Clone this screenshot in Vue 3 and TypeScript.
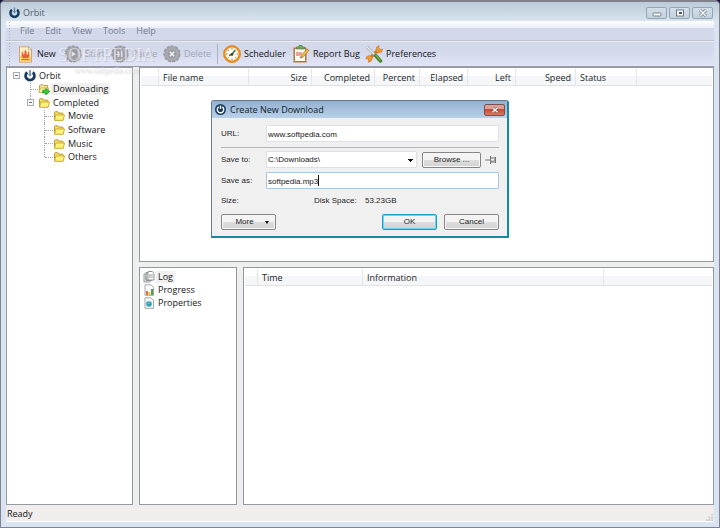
<script setup lang="ts">
import { ref } from 'vue'

interface Column { label: string; kind: string }
interface Branch { label: string; level: number; icon: string; open?: boolean; active?: boolean }

const menus: string[] = ['File', 'Edit', 'View', 'Tools', 'Help']

const columns: Column[] = [
  { label: '', kind: 'mark' },
  { label: 'File name', kind: 'name' },
  { label: 'Size', kind: 'size' },
  { label: 'Completed', kind: 'completed' },
  { label: 'Percent', kind: 'percent' },
  { label: 'Elapsed', kind: 'elapsed' },
  { label: 'Left', kind: 'left' },
  { label: 'Speed', kind: 'speed' },
  { label: 'Status', kind: 'state' },
  { label: '', kind: 'rest' },
]

const logColumns: Column[] = [
  { label: '', kind: 'edge' },
  { label: 'Time', kind: 'time' },
  { label: 'Information', kind: 'info' },
  { label: '', kind: 'rest' },
]

const tree: Branch[] = [
  { label: 'Orbit', level: 0, icon: 'orbit', open: true },
  { label: 'Downloading', level: 1, icon: 'loading', active: true },
  { label: 'Completed', level: 1, icon: 'folder', open: true },
  { label: 'Movie', level: 2, icon: 'folder' },
  { label: 'Software', level: 2, icon: 'folder' },
  { label: 'Music', level: 2, icon: 'folder' },
  { label: 'Others', level: 2, icon: 'folder' },
]

const url = ref('www.softpedia.com')
const folder = ref('C:\\Downloads\\')
const fileName = ref('softpedia.mp3')
</script>

<template>
  <div class="window">
    <svg class="defs" aria-hidden="true">
      <defs>
        <symbol id="orbit" viewBox="0 0 12 12">
          <path d="M3.2 2.4A4.4 4.4 0 1 0 8.8 2.4" fill="none" stroke="#173c60" stroke-width="2.8" />
          <path d="M6 0v5" stroke="#5580a5" stroke-width="1.5" />
          <path d="M4.2 4.2h3.6L6 6.6z" fill="#5580a5" />
        </symbol>
        <symbol id="folder" viewBox="0 0 12 12">
          <path d="M1.5 10V2.5q0-.8.8-.8h2.4l1.2 1.4h3.4q.8 0 .8.8V10z" fill="#f3dc63" stroke="#b99a35" />
          <path d="M1.5 10.3 2.8 5h8.7l-1.3 5.3z" fill="#fff37c" stroke="#cdb13e" />
        </symbol>
        <symbol id="loading" viewBox="0 0 12 12">
          <path d="M1.5 9V2.5l3-1.2 1.2 1.2h3.8V9z" fill="#f4e49b" stroke="#b8a04c" />
          <path d="M1 9.5 2.5 5h8.2L9.3 9.5z" fill="#fff7aa" stroke="#cdb552" />
          <path d="M4.8 7.2h3V5.4L11.7 8.6 7.8 11.8V10h-3z" fill="#37cf35" stroke="#168521" stroke-width=".8" />
        </symbol>
        <symbol id="disc" viewBox="0 0 18 18">
          <circle cx="9" cy="9" r="7.8" fill="#a6a7ad" stroke="#999aa2" stroke-width="1.6" stroke-dasharray="3.2 1.2" />
          <circle cx="9" cy="9" r="5.2" fill="#9b9ca3" stroke="#b2b3bb" stroke-width=".8" />
        </symbol>
      </defs>
    </svg>

    <header class="titlebar">
      <svg class="logo"><use href="#orbit" /></svg>
      <h1>Orbit</h1>
      <div class="window-buttons">
        <button type="button" aria-label="Minimize">
          <svg viewBox="0 0 10 8"><rect x="1" y="4" width="8" height="3" rx="1" fill="#fff" stroke="#74808c" /></svg>
        </button>
        <button type="button" aria-label="Maximize">
          <svg viewBox="0 0 10 8"><rect x="1.5" y="1" width="7" height="6" fill="#fff" stroke="#6d7985" /><rect x="4" y="3" width="3" height="2" fill="#48525e" /></svg>
        </button>
        <button type="button" aria-label="Close">
          <svg viewBox="0 0 10 8"><path d="m2 1 6 6M8 1 2 7" stroke="#6d7985" stroke-width="3" /><path d="m2 1 6 6M8 1 2 7" stroke="#fff" stroke-width="1.5" /></svg>
        </button>
      </div>
    </header>

    <div class="client">
      <nav class="menubar">
        <button v-for="menu in menus" :key="menu" type="button">{{ menu }}</button>
      </nav>

      <div class="toolbar">
        <button type="button" class="tool new">
          <svg viewBox="0 0 14 17">
            <path d="M1 .8h9l3 3v12.4H1z" fill="#fff0bd" stroke="#c9a183" />
            <path d="M10 .8v3h3z" fill="#fff" stroke="#b69a86" stroke-width=".7" />
            <path d="M2 10h10v5H2z" fill="#f8c65a" />
            <path d="M3 9.5q0-2 1-4.500.8 1.500.6 3.500h1.300q-.2-3 1.100-5 1.300 2 1.100 5h1.300q-.2-2 .6-3.500 1 2.500 1 4.500L9.600 12H4.400z" fill="#ec5a3e" />
            <path d="M3 13.600h8" stroke="#dc6b36" />
          </svg>New
        </button>
        <button type="button" class="tool start" disabled>
          <svg viewBox="0 0 18 18"><use href="#disc" /><path d="m7.5 6 4.2 3-4.2 3z" fill="#e4e5ec" /></svg>Start
        </button>
        <button type="button" class="tool pause" disabled>
          <svg viewBox="0 0 18 18"><use href="#disc" /><path d="M7.3 6v6M10.7 6v6" stroke="#e4e5ec" stroke-width="1.6" /></svg>Pause
        </button>
        <button type="button" class="tool delete" disabled>
          <svg viewBox="0 0 18 18"><use href="#disc" /><path d="m6.8 6.8 4.4 4.4m0-4.4-4.4 4.4" stroke="#f2f2f6" stroke-width="1.6" /></svg>Delete
        </button>
        <span class="divider"></span>
        <button type="button" class="tool scheduler">
          <svg viewBox="0 0 18 18">
            <circle cx="9" cy="9" r="7.6" fill="#fffdf2" stroke="#ee911d" stroke-width="2.2" />
            <circle cx="9" cy="9" r="8.5" fill="none" stroke="#c9781c" stroke-width=".5" />
            <path d="M9 3v1.5M9 13.5V15M3 9h1.5M13.5 9H15M4.8 4.8l1 1m6.4 6.4 1 1m-8.4 0 1-1" stroke="#a46f46" />
            <path d="m6 10.5 3-1.2L12.3 5" fill="none" stroke="#397348" stroke-width="1.5" />
            <circle cx="9" cy="9.4" r="1.3" fill="#493f30" />
          </svg>Scheduler
        </button>
        <button type="button" class="tool report">
          <svg viewBox="0 0 17 18">
            <rect x="1" y="2.500" width="13" height="15" fill="#b77543" />
            <path d="M2.500 4h10v12h-10z" fill="#fffaf4" />
            <path d="M4 4V2h2l.5-1.500h3L10 2h2v2z" fill="#74a957" stroke="#4d7d3d" stroke-width=".7" />
            <path d="M4.500 7v4M6.500 7v4M8.500 7v3" stroke="#db4b3b" />
            <path d="m8 13 .8-2.600L14.600 4l1.800 1.600-5.800 6.200z" fill="#f8c23b" stroke="#ad742b" stroke-width=".8" />
            <path d="m8 13 .5-1.500.9.9z" fill="#5a4536" />
          </svg>Report Bug
        </button>
        <button type="button" class="tool preferences">
          <svg viewBox="0 0 18 18">
            <path d="M3.2 14.8 14 4.2" stroke="#db761f" stroke-width="3.2" />
            <path d="M11 4.5q0-3 3-3.8L13.7 3l1.6 1.4L17.4 4q0 3.8-3.5 4-3 0-2.900-3.500zM.8 13.700q.6-3.300 3.900-3.100 3 .5 2.400 3.500-.6 3-3.800 3.200l.6-2.200-1.200-1.400z" fill="#f19a2d" stroke="#c57324" stroke-width=".6" />
            <path d="m2 2 8 8" stroke="#9aa2a3" stroke-width="2.6" />
            <path d="m2 2 8 8" stroke="#f4f6f4" stroke-width="1.3" />
            <path d="m10.500 10.500 5 5.500" stroke="#4c8733" stroke-width="3.500" stroke-linecap="round" />
            <path d="m10.600 10 4.800 5.200" stroke="#8fbd57" />
          </svg>Preferences
        </button>
      </div>

      <div class="watermark" aria-hidden="true"><strong>SOFTPEDIA</strong><span>www.softpedia.com</span></div>

      <main class="panes">
        <aside class="pane tree-pane">
          <ul class="tree">
            <li v-for="item in tree" :key="item.label" :class="['level-' + item.level, { open: item.open }]">
              <button v-if="item.open" type="button" class="expander" aria-label="Collapse"></button>
              <span v-else class="branch"></span>
              <svg class="tree-icon"><use :href="'#' + item.icon" /></svg>
              <span class="label" :class="{ active: item.active }">{{ item.label }}</span>
            </li>
          </ul>
        </aside>

        <div class="work">
          <section class="pane downloads">
            <table>
              <thead>
                <tr><th v-for="column in columns" :key="column.kind" :class="column.kind">{{ column.label }}</th></tr>
              </thead>
            </table>
          </section>

          <div class="details">
            <ul class="pane tabs">
              <li>
                <svg viewBox="0 0 12 12"><path d="M1 3h6v8H1zM3 1.5h6v8H3z" fill="#eef0ef" stroke="#909696" /><path d="M5 .5h4.5l1.500 2V9H5z" fill="#fff" stroke="#909696" /><path d="M6 4h4M6 6h4M2 6h2M2 8h3" stroke="#969c9c" /></svg>
                <span class="label active">Log</span>
              </li>
              <li>
                <svg viewBox="0 0 12 12"><path d="M2 .8h6l2.5 2.5v8H2z" fill="#fff" stroke="#a2a8a8" /><path d="M3 7h2v4H3z" fill="#e36a3a" /><path d="M5.5 8h1.8v3H5.5z" fill="#e8bd35" /><path d="M8 5h2v6H8z" fill="#42a550" /></svg>
                <span class="label">Progress</span>
              </li>
              <li>
                <svg viewBox="0 0 12 12"><path d="M2 .8h6l2.5 2.5v8H2z" fill="#f5f8f8" stroke="#a2a8a8" /><circle cx="6" cy="7" r="2.8" fill="#31a5bc" /><path d="M4 5.5h2l1 1-2 1zM7 8l1-1" fill="#91dedd" stroke="#3b81b6" stroke-width=".6" /></svg>
                <span class="label">Properties</span>
              </li>
            </ul>
            <section class="pane log">
              <table>
                <thead>
                  <tr><th v-for="column in logColumns" :key="column.kind" :class="column.kind">{{ column.label }}</th></tr>
                </thead>
              </table>
            </section>
          </div>
        </div>
      </main>

      <footer class="status">
        <span>Ready</span>
        <svg viewBox="0 0 8 8"><path d="M6 0h2v2H6zM3 3h2v2H3zM6 3h2v2H6zM0 6h2v2H0zM3 6h2v2H3zM6 6h2v2H6z" fill="#c9c7c7" /></svg>
      </footer>
    </div>

    <form class="dialog" role="dialog" aria-labelledby="dialog-title" @submit.prevent>
      <header>
        <svg class="dialog-logo" viewBox="0 0 12 12"><circle cx="6" cy="6" r="6" fill="#173c60" /><path d="M4 3.200a3.500 3.500 0 1 0 4 0M6 1.500v4" fill="none" stroke="#fff" stroke-width="1.500" /></svg>
        <h2 id="dialog-title">Create New Download</h2>
        <button type="button" class="dialog-close" aria-label="Close">
          <svg viewBox="0 0 8 6"><path d="m1.5.8 5 4.4m0-4.4-5 4.4" stroke="#6c4a49" stroke-width="2.6" /><path d="m1.5.8 5 4.4m0-4.4-5 4.4" stroke="#fff" stroke-width="1.5" /></svg>
        </button>
      </header>
      <div class="dialog-body">
        <div class="field url-row">
          <label for="url">URL:</label>
          <input id="url" v-model="url" type="text" />
        </div>
        <div class="field folder-row">
          <label for="folder">Save to:</label>
          <select id="folder" v-model="folder"><option>C:\Downloads\</option></select>
          <button type="button" class="push browse">Browse ...</button>
          <button type="button" class="pin" aria-label="Pin">
            <svg viewBox="0 0 12 10"><path d="M0 5h5M5.500 1v8M6 3h4v4H6M10.500 2v6" fill="none" stroke="#777" /><path d="M6 5.500h4V7H6z" fill="#999" /></svg>
          </button>
        </div>
        <div class="field name-row">
          <label for="name">Save as:</label>
          <div class="focused">
            <input id="name" v-model="fileName" type="text" />
            <i class="caret"></i>
          </div>
        </div>
        <div class="facts">
          <span>Size:</span><span>Disk Space:</span><span>53.23GB</span>
        </div>
        <div class="actions">
          <button type="button" class="push more">More<i class="arrow"></i></button>
          <button type="submit" class="push ok">OK</button>
          <button type="button" class="push cancel">Cancel</button>
        </div>
      </div>
    </form>
  </div>
</template>

<style>
html,
body {
  margin: 0;
  background: #12103c;
}
</style>

<style scoped>
* {
  box-sizing: border-box;
}

.window {
  position: relative;
  display: flex;
  flex-direction: column;
  min-height: 100vh;
  padding: 0 5px 5px;
  border: 1px solid #83828c;
  border-top-width: 2px;
  border-radius: 5px 5px 0 0;
  background: #d8e4f2;
  color: #151515;
  font: 9px/12px "Open Sans", "Noto Sans", sans-serif;
}

.defs {
  position: absolute;
  width: 0;
  height: 0;
}

button {
  margin: 0;
  padding: 0;
  border: 0;
  background: none;
  color: inherit;
  font: inherit;
}

ul {
  margin: 0;
  padding: 0;
  list-style: none;
}

svg {
  display: block;
  flex: none;
}

h1,
h2 {
  margin: 0;
  font: inherit;
}

.titlebar {
  display: flex;
  align-items: center;
  height: 19px;
  margin: 0 -5px;
  padding: 3px 6px 0 8px;
  border-radius: 4px 4px 0 0;
  background: linear-gradient(#bccbd8, #d8e5ef);
}

.logo {
  width: 11px;
  height: 12px;
  margin-right: 3px;
}

.titlebar h1 {
  color: #53606a;
}

.window-buttons {
  display: flex;
  gap: 2px;
  margin-left: auto;
}

.window-buttons button {
  display: grid;
  place-items: center;
  width: 21px;
  height: 12px;
  border: 1px solid #94a4b5;
  border-radius: 2px;
  background: linear-gradient(#d2dee9, #c3d1de);
}

.window-buttons svg {
  width: 10px;
  height: 8px;
}

.client {
  display: flex;
  flex: 1;
  flex-direction: column;
  background: #f0efef;
}

.menubar {
  display: flex;
  align-items: center;
  gap: 11px;
  height: 20px;
  padding-left: 14px;
  border-bottom: 1px solid #c2c4cd;
  background: radial-gradient(circle, #a6afc5 1px, transparent 1px) 2px 0 / 3px 3px repeat-y,
    linear-gradient(#fff, #e9edf7 7px, #d3d9eb 7px);
  color: #757b8c;
}

.toolbar {
  display: flex;
  align-items: center;
  height: 26px;
  padding-left: 12px;
  border-top: 1px solid #e9ebf4;
  border-bottom: 1px solid #9a9cac;
  background: radial-gradient(circle, #a6afc5 1px, transparent 1px) 2px 0 / 3px 3px repeat-y,
    linear-gradient(#d3d8eb 40%, #e1e5f6);
}

.tool {
  display: flex;
  align-items: center;
  gap: 3px;
  white-space: nowrap;
}

.tool svg {
  width: 18px;
  height: 18px;
}

.tool:disabled {
  color: #a4a7b3;
}

.tool.new svg {
  width: 15px;
  height: 17px;
}

.new {
  gap: 4px;
  width: 46px;
}

.start {
  width: 47px;
}

.pause {
  width: 52px;
}

.delete {
  width: 54px;
}

.divider {
  width: 1px;
  height: 20px;
  margin-right: 5px;
  background: #aeb2c1;
}

.scheduler {
  width: 69px;
}

.report {
  width: 73px;
}

.watermark {
  position: absolute;
  top: 42px;
  left: 57px;
  display: flex;
  flex-direction: column;
  align-items: center;
  color: rgb(255 255 255 / 55%);
  font: 18px/22px "Liberation Serif", serif;
  text-shadow: 1px 1px 1px rgb(140 140 160 / 30%);
  pointer-events: none;
}

.watermark strong {
  font-weight: 400;
}

.watermark span {
  color: #ececec;
  font-size: 8px;
  line-height: 10px;
}

.panes {
  display: flex;
  flex: 1;
  gap: 6px;
}

.pane {
  border: 1px solid #9498a1;
  background: #fff;
}

.tree-pane {
  flex: none;
  width: 127px;
}

.tree {
  display: grid;
  grid-auto-rows: 1fr;
  height: 95px;
  margin-top: 1px;
}

.tree li {
  position: relative;
  display: flex;
  align-items: center;
}

.level-0 {
  padding-left: 6px;
}

.level-1 {
  padding-left: 20px;
}

.level-2 {
  padding-left: 35px;
}

.tree li::before {
  position: absolute;
  top: 0;
  bottom: 0;
  left: 23px;
  border-left: 1px dotted #a5a5a5;
  content: "";
}

.tree .level-0::before {
  border: 0;
}

.tree .level-1.open::before {
  bottom: 50%;
}

.tree .level-2::before {
  left: 37px;
}

.tree .level-2:last-child::before {
  bottom: 50%;
}

.expander {
  position: relative;
  width: 7px;
  height: 7px;
  margin-right: 4px;
  border: 1px solid #a7adb2;
  background: linear-gradient(#687785, #687785) center / 3px 1px no-repeat #f8f8f8;
}

.branch {
  width: 8px;
  height: 1px;
  margin: 0 0 0 3px;
  border-top: 1px dotted #a5a5a5;
}

.tree-icon {
  width: 12px;
  height: 12px;
}

.label {
  margin-left: 1px;
  padding: 0 2px;
}

.label.active {
  background: #f0f0f0;
}

.work {
  display: flex;
  flex: 1;
  flex-direction: column;
  gap: 5px;
  min-width: 0;
}

.downloads {
  height: 195px;
  padding: 1px 1px 0;
}

.details {
  display: flex;
  flex: 1;
  gap: 6px;
}

.tabs {
  display: flex;
  flex: none;
  flex-direction: column;
  width: 98px;
  padding: 2px 3px;
}

.tabs li {
  display: flex;
  align-items: center;
  height: 13px;
}

.tabs svg {
  width: 12px;
  height: 12px;
}

.log {
  flex: 1;
  padding: 1px 1px 0;
}

table {
  width: 100%;
  border-collapse: separate;
  border-spacing: 0;
  table-layout: fixed;
}

th {
  height: 17px;
  padding: 1px 4px 0;
  border-right: 1px solid #e3e5e8;
  border-bottom: 1px solid #e0e2e5;
  background: linear-gradient(#fff 45%, #f5f6f7 45%);
  color: #22262b;
  font-weight: 400;
  text-align: right;
  white-space: nowrap;
}

.mark {
  width: 18px;
}

.name {
  width: 90px;
  text-align: left;
}

.size,
.completed {
  width: 63px;
}

.percent {
  width: 45px;
}

.elapsed,
.left {
  width: 48px;
}

.speed {
  width: 60px;
}

.state {
  width: 61px;
  text-align: left;
}

.edge {
  width: 13px;
}

.time {
  width: 105px;
  text-align: left;
}

.info {
  width: 241px;
  text-align: left;
}

.rest {
  border-right: 0;
}

.status {
  display: flex;
  align-items: center;
  justify-content: space-between;
  height: 17px;
  padding: 2px 1px 0;
  border-bottom: 1px solid #fff;
  background: #f0edec;
}

.status svg {
  align-self: flex-end;
  width: 7px;
  height: 7px;
}

.dialog {
  position: absolute;
  top: 98px;
  left: 210px;
  width: 298px;
  border: 1px solid #667b8e;
  border-right: 2px solid #1389a3;
  border-bottom: 2px solid #1389a3;
  border-radius: 3px 3px 0 0;
  background: #f0f0f0;
  color: #252525;
  font: 8px/12px "Liberation Sans", Arial, sans-serif;
}

.dialog header {
  display: flex;
  align-items: center;
  gap: 4px;
  height: 17px;
  padding: 0 2px 0 3px;
  border-radius: 2px 2px 0 0;
  background: linear-gradient(#93b0d0, #b9d1e9);
}

.dialog-logo {
  width: 11px;
  height: 11px;
}

.dialog h2 {
  color: #111b26;
  font: 9px/12px "Open Sans", "Noto Sans", sans-serif;
}

.dialog-close {
  display: grid;
  place-items: center;
  width: 21px;
  height: 12px;
  margin-left: auto;
  border: 1px solid #7c4f53;
  border-radius: 2px;
  background: linear-gradient(#dca095 45%, #c34a33 45%, #d77a5d);
}

.dialog-close svg {
  width: 8px;
  height: 6px;
}

.dialog-body {
  padding: 7px 8px 6px 9px;
}

.field {
  display: flex;
  align-items: center;
}

.field label {
  flex: none;
  width: 45px;
  padding-top: 1px;
}

.field input,
.field select {
  flex: 1;
  min-width: 0;
  height: 17px;
  margin: 0;
  padding: 1px 1px 0;
  border: 1px solid #dde1e7;
  border-radius: 1px;
  outline: 0;
  background: #fff;
  color: #151515;
  font: inherit;
}

.url-row {
  padding-bottom: 5px;
  border-bottom: 1px solid #b5b5b5;
}

.folder-row {
  padding: 3px 0 4px;
}

.field select {
  flex: none;
  width: 151px;
  appearance: none;
  background: linear-gradient(#111, #111) 141px 7px / 5px 1px no-repeat,
    linear-gradient(#111, #111) 142px 8px / 3px 1px no-repeat,
    linear-gradient(#111, #111) 143px 9px / 1px 1px no-repeat, #fff;
}

.focused {
  position: relative;
  display: flex;
  flex: 1;
}

.focused input {
  border-color: #a9c8df;
}

.caret {
  position: absolute;
  top: 3px;
  left: 52px;
  width: 1px;
  height: 11px;
  background: #111;
}

.push {
  height: 16px;
  border: 1px solid #858585;
  border-radius: 2px;
  background: linear-gradient(#f3f3f3 48%, #dedede 48%, #d2d2d2);
  box-shadow: inset 0 0 0 1px #f8f8f8;
}

.browse {
  width: 59px;
  margin-left: 5px;
}

.pin {
  margin-left: 4px;
}

.pin svg {
  width: 12px;
  height: 10px;
}

.facts {
  display: grid;
  grid-template-columns: 93px 51px 1fr;
  padding: 6px 0 7px;
}

.actions {
  display: flex;
  gap: 7px;
}

.more {
  display: flex;
  align-items: center;
  justify-content: center;
  gap: 11px;
  width: 55px;
  margin-right: auto;
  padding-left: 7px;
}

.arrow {
  border: 2px solid transparent;
  border-top: 3px solid #111;
  border-bottom: 0;
}

.ok {
  width: 55px;
  border-color: #18a1c8;
  box-shadow: inset 0 0 0 1px #70d4ee;
}

.cancel {
  width: 55px;
}
</style>
